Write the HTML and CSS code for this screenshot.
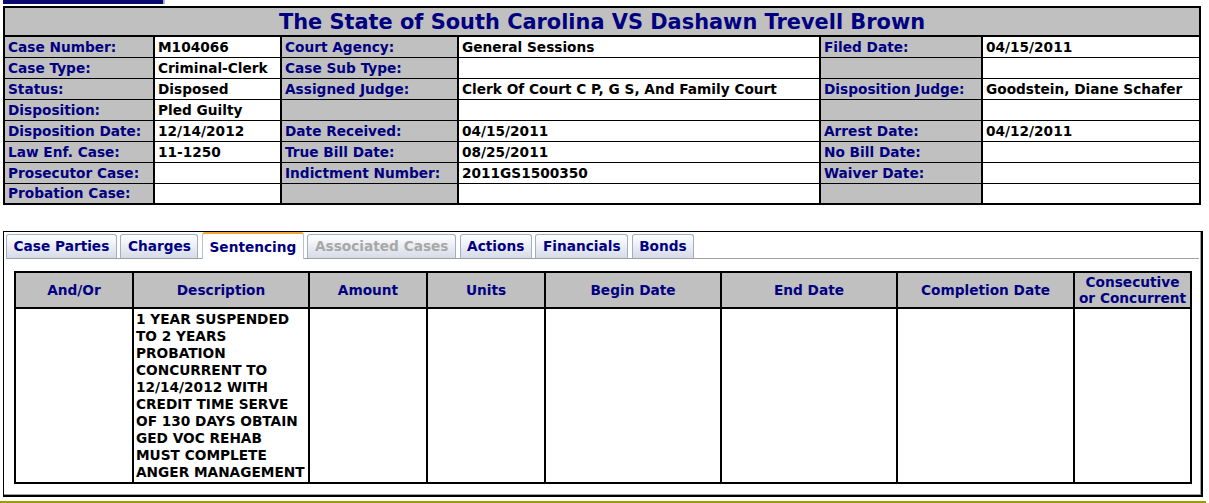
FILE: index.html
```html
<html>
<head>
	<meta charset="utf-8">
	<title>Case Details</title>
	<link rel="stylesheet" href="styles.css">
</head>
<body>

	<div class="topbar"><span class="topbar-tab"></span><span class="topbar-edge"></span></div>

	<table class="case">
		<colgroup>
			<col style="width:150px"><col style="width:127px"><col style="width:177px">
			<col style="width:362px"><col style="width:162px"><col>
		</colgroup>
		<tr><th colspan="6" class="title">The State of South Carolina VS Dashawn Trevell Brown</th></tr>
		<tr>
			<td class="lbl">Case Number:</td><td>M104066</td>
			<td class="lbl">Court Agency:</td><td>General Sessions</td>
			<td class="lbl">Filed Date:</td><td>04/15/2011</td>
		</tr>
		<tr>
			<td class="lbl">Case Type:</td><td>Criminal-Clerk</td>
			<td class="lbl">Case Sub Type:</td><td></td>
			<td class="lbl"></td><td></td>
		</tr>
		<tr>
			<td class="lbl">Status:</td><td>Disposed</td>
			<td class="lbl">Assigned Judge:</td><td>Clerk Of Court C P, G S, And Family Court</td>
			<td class="lbl">Disposition Judge:</td><td>Goodstein, Diane Schafer</td>
		</tr>
		<tr>
			<td class="lbl">Disposition:</td><td>Pled Guilty</td>
			<td class="lbl"></td><td></td>
			<td class="lbl"></td><td></td>
		</tr>
		<tr>
			<td class="lbl">Disposition Date:</td><td>12/14/2012</td>
			<td class="lbl">Date Received:</td><td>04/15/2011</td>
			<td class="lbl">Arrest Date:</td><td>04/12/2011</td>
		</tr>
		<tr>
			<td class="lbl">Law Enf. Case:</td><td>11-1250</td>
			<td class="lbl">True Bill Date:</td><td>08/25/2011</td>
			<td class="lbl">No Bill Date:</td><td></td>
		</tr>
		<tr>
			<td class="lbl">Prosecutor Case:</td><td></td>
			<td class="lbl">Indictment Number:</td><td>2011GS1500350</td>
			<td class="lbl">Waiver Date:</td><td></td>
		</tr>
		<tr>
			<td class="lbl">Probation Case:</td><td></td>
			<td class="lbl"></td><td></td>
			<td class="lbl"></td><td></td>
		</tr>
	</table>

	<div class="tabbox">
		<ul class="tabs">
			<li>Case Parties</li>
			<li>Charges</li>
			<li class="active">Sentencing</li>
			<li class="disabled">Associated Cases</li>
			<li>Actions</li>
			<li>Financials</li>
			<li>Bonds</li>
		</ul>
		<div class="panel">
			<table class="sentence">
				<colgroup>
					<col style="width:118px"><col style="width:176px"><col style="width:118px"><col style="width:118px">
					<col style="width:176px"><col style="width:176px"><col style="width:177px"><col>
				</colgroup>
				<tr>
					<th>And/Or</th>
					<th>Description</th>
					<th>Amount</th>
					<th>Units</th>
					<th>Begin Date</th>
					<th>End Date</th>
					<th>Completion Date</th>
					<th>Consecutive<br>or Concurrent</th>
				</tr>
				<tr>
					<td></td>
					<td>1 YEAR SUSPENDED TO 2 YEARS PROBATION CONCURRENT TO 12/14/2012 WITH CREDIT TIME SERVE OF 130 DAYS OBTAIN GED VOC REHAB MUST COMPLETE ANGER MANAGEMENT</td>
					<td></td>
					<td></td>
					<td></td>
					<td></td>
					<td></td>
					<td></td>
				</tr>
			</table>
		</div>
	</div>

	<div class="footer"></div>

</body>
</html>
```

FILE: styles.css
```css
*{
	box-sizing: border-box;
	padding: 0;
	margin: 0;
}
body
{
	padding: 0 6px 0 3px;
	font-family: Tahoma, "DejaVu Sans", Verdana, sans-serif;
	font-size: 13.7px;
	font-weight: bold;
	color: #000;
	background: #fff;
}
table
{
	font: inherit;
	color: inherit;
}
.topbar
{
	display: flex;
	height: 4px;
}
.topbar-tab
{
	width: 160px;
	background: #0a0a6e;
}
.topbar-edge
{
	width: 2px;
	background: #b0b0b0;
}
.case
{
	width: 1198px;
	margin-top: 2px;
	border-collapse: collapse;
	border: 2px solid #000;
	table-layout: fixed;
}
.case td
{
	height: 21px;
	padding: 0 3px;
	border-top: 1px solid #000;
	border-left: 2px solid #000;
	white-space: nowrap;
	overflow: hidden;
	background: #fff;
}
.case td.lbl
{
	background: #c0c0c0;
	color: #000080;
}
.case .title
{
	height: 29px;
	background: #c0c0c0;
	color: #000080;
	font-size: 20.9px;
	text-align: center;
	border-bottom: 2px solid #000;
}
.tabbox
{
	margin-top: 26px;
	width: 1200px;
	border: 1px solid #000;
	box-shadow: inset -1px -1px 0 #000, inset -2px -2px 0 #a0a0a0;
	padding: 2px 3px 12px 1px;
}
.tabs
{
	display: flex;
	gap: 3.6px;
	list-style: none;
	border-bottom: 1px solid #a0a0a0;
	height: 25px;
	margin-left: 1px;
}
.tabs li
{
	height: 24px;
	padding: 3px 6.5px 0;
	color: #000080;
	border: 1px solid #a3aec6;
	border-bottom: 0;
	border-radius: 3px 3px 0 0;
	background: linear-gradient(#ffffff, #e6e9f1 60%, #d6dbe7);
	white-space: nowrap;
}
.tabs li.active
{
	height: 27px;
	margin-top: -2px;
	padding-top: 5px;
	background: #fff;
	border-color: #b8c0d4;
	border-top: 2px solid #f0a830;
	color: #000080;
}
.tabs li.disabled
{
	color: #a8a8a8;
}
.panel
{
	padding: 12px 9px 0 9px;
}
.sentence
{
	width: 1178px;
	border-collapse: collapse;
	table-layout: fixed;
	border: 2px solid #000;
}
.sentence th
{
	height: 36px;
	background: #c0c0c0;
	color: #000080;
	border: 2px solid #000;
	line-height: 16px;
	padding: 0;
}
.sentence td
{
	height: 175px;
	vertical-align: top;
	border: 2px solid #000;
	padding: 2px 2px 0;
	line-height: 17px;
}
.footer
{
	margin: 4px 0 0 -3px;
	width: 1206px;
	height: 4px;
	border-top: 2px solid #9c9c00;
	background: #ffffcc;
}
```
